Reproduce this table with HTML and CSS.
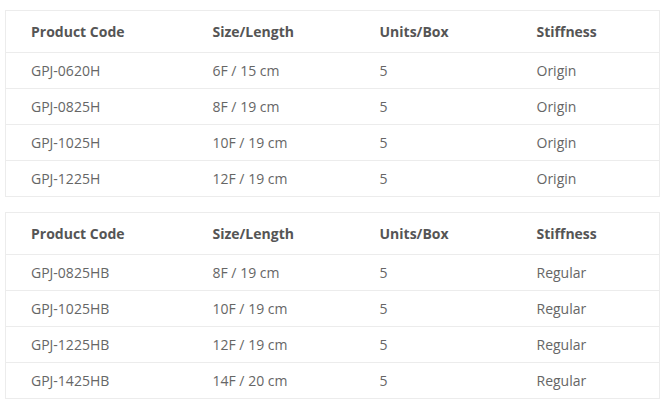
FILE: index.html
```html
<!DOCTYPE html>
<html>
<head>
<meta charset="utf-8">
<link rel="stylesheet" href="styles.css">
</head>
<body>
<div class="page">
  <table class="spec">
    <colgroup><col class="c1"><col class="c2"><col class="c3"><col class="c4"></colgroup>
    <thead>
      <tr><th>Product Code</th><th>Size/Length</th><th>Units/Box</th><th>Stiffness</th></tr>
    </thead>
    <tbody>
      <tr><td>GPJ-0620H</td><td>6F / 15 cm</td><td>5</td><td>Origin</td></tr>
      <tr><td>GPJ-0825H</td><td>8F / 19 cm</td><td>5</td><td>Origin</td></tr>
      <tr><td>GPJ-1025H</td><td>10F / 19 cm</td><td>5</td><td>Origin</td></tr>
      <tr><td>GPJ-1225H</td><td>12F / 19 cm</td><td>5</td><td>Origin</td></tr>
    </tbody>
  </table>
  <table class="spec">
    <colgroup><col class="c1"><col class="c2"><col class="c3"><col class="c4"></colgroup>
    <thead>
      <tr><th>Product Code</th><th>Size/Length</th><th>Units/Box</th><th>Stiffness</th></tr>
    </thead>
    <tbody>
      <tr><td>GPJ-0825HB</td><td>8F / 19 cm</td><td>5</td><td>Regular</td></tr>
      <tr><td>GPJ-1025HB</td><td>10F / 19 cm</td><td>5</td><td>Regular</td></tr>
      <tr><td>GPJ-1225HB</td><td>12F / 19 cm</td><td>5</td><td>Regular</td></tr>
      <tr><td>GPJ-1425HB</td><td>14F / 20 cm</td><td>5</td><td>Regular</td></tr>
    </tbody>
  </table>
</div>
</body>
</html>
```
FILE: styles.css
```css
html, body {
  margin: 0;
  padding: 0;
  background: #fff;
}
.page {
  padding: 10px 0 0 5px;
  font-family: "Open Sans", sans-serif;
  font-size: 14px;
}
.spec {
  border-collapse: collapse;
  table-layout: fixed;
  width: 654px;
  border: 1px solid #ececec;
  margin-bottom: 15px;
}
.c1 { width: 182px; }
.c2 { width: 167px; }
.c3 { width: 157px; }
.c4 { width: 148px; }
.spec th, .spec td {
  text-align: left;
  padding: 0 0 0 25px;
  border-bottom: 1px solid #ececec;
  white-space: nowrap;
}
.spec th {
  height: 41px;
  font-weight: 700;
  color: #555;
}
.spec td {
  height: 35px;
  color: #666;
}
```
